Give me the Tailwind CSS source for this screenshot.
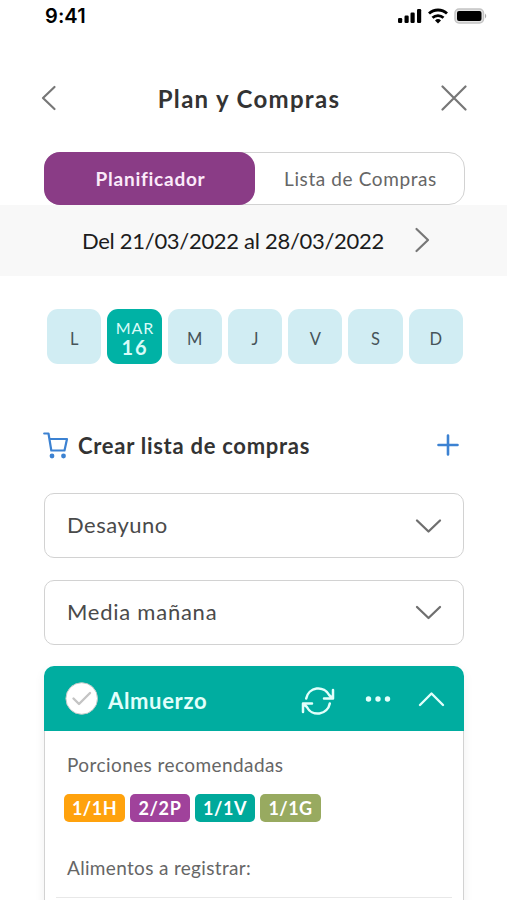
<!DOCTYPE html>
<html lang="es">
<head>
<meta charset="utf-8">
<title>Plan y Compras</title>
<script src="https://cdn.jsdelivr.net/npm/@tailwindcss/browser@4"></script>
</head>
<body class="h-[900px] w-[507px] overflow-hidden bg-white font-['Lato',sans-serif] text-[#333] whitespace-nowrap">
<div class="flex h-[900px] flex-col overflow-hidden">
  <!-- Status bar -->
  <div class="flex h-8 shrink-0 items-center justify-between pr-[19px] pl-[45px]">
    <span class="font-['Inter',sans-serif] text-[20px] leading-8 font-semibold tracking-[0.1px] text-black">9:41</span>
    <div class="flex items-center gap-[6px]">
      <svg class="h-4 w-6" viewBox="0 0 24 16" fill="#000"><rect x="0" y="10" width="4.200" height="5" rx="1.200"/><rect x="6.500" y="7.500" width="4.200" height="7.500" rx="1.200"/><rect x="12.500" y="4.500" width="4.200" height="10.500" rx="1.200"/><rect x="19" y="1" width="4.200" height="14" rx="1.200"/></svg>
      <svg class="h-4 w-5" viewBox="0 0 20 16" fill="none" stroke="#000" stroke-width="2.800"><path d="M1 5.600a13 13 0 0 1 18 0"/><path d="M4.500 9.800a8 8 0 0 1 11 0"/><path d="M10 15.500l-3-3a4.400 4.400 0 0 1 6 0z" fill="#000" stroke="none"/></svg>
      <svg class="h-4 w-[34px]" viewBox="0 0 34 16"><rect x="1" y="1" width="28.500" height="14" rx="4" fill="#e4e4e4" stroke="#c4c4c4" stroke-width="1.500"/><rect x="3" y="3" width="24.500" height="10" rx="2" fill="#000"/><path d="M31 5.500q2.500 2.500 0 5z" fill="#aaa"/></svg>
    </div>
  </div>

  <!-- Title -->
  <header class="flex h-[120px] shrink-0 items-center justify-between pt-[12px] pr-[40px] pl-[41px]">
    <svg class="h-[26px] w-[16px]" viewBox="0 0 16 26" fill="none" stroke="#777" stroke-width="2.200" stroke-linecap="round" stroke-linejoin="round"><path d="M13.500 2 2 13l11.500 11"/></svg>
    <h1 class="pt-[2px] text-[24px] leading-8 font-bold tracking-[1.3px]">Plan y Compras</h1>
    <svg class="h-[26px] w-[26px]" viewBox="0 0 26 26" fill="none" stroke="#777" stroke-width="2.200" stroke-linecap="round"><path d="M1.500 1.500 24.500 24.500M24.500 1.500 1.500 24.500"/></svg>
  </header>

  <!-- Tabs -->
  <div class="mr-[42px] ml-[44px] flex h-[53px] shrink-0 rounded-[16px] border-[1.5px] border-[#d2d2d2] bg-white">
    <div class="-m-px flex w-[211px] items-center justify-center rounded-[16px] bg-[#8a3c86] pb-px text-[19px] font-bold tracking-[0.75px] text-[#fbeafa]"><span class="pt-[3px] pl-[2px]">Planificador</span></div>
    <div class="flex flex-1 items-center justify-center text-[19px] tracking-[0.6px] text-[#666]"><span class="pt-[2px] pl-[3px]">Lista de Compras</span></div>
  </div>

  <!-- Week range -->
  <div class="flex h-[71px] shrink-0 items-center bg-[#f8f8f8] pl-[82px]">
    <span class="w-[332px] pb-px text-[22px] tracking-[-0.3px] text-[#1c1c1c]">Del 21/03/2022 al 28/03/2022</span>
    <svg class="mb-[2px] h-[26px] w-[16px]" viewBox="0 0 16 26" fill="none" stroke="#777" stroke-width="2.200" stroke-linecap="round" stroke-linejoin="round"><path d="M2.500 2 14 13 2.500 24"/></svg>
  </div>

  <!-- Days -->
  <div class="mx-[47px] mt-[33px] grid h-[55px] w-[416px] shrink-0 grid-cols-7 gap-[6px] text-[16.500px] text-[#465459] *:flex *:items-center *:justify-center *:rounded-[11px]">
    <div class="bg-[#d1edf3] pt-[5px]">L</div>
    <div class="flex-col bg-[#00b2a5] text-[#d9fbf8]"><span class="pl-px text-[16px] leading-[20px] tracking-[0.8px]">MAR</span><span class="pl-px text-[20px] leading-[18px] font-bold tracking-[1.8px]">16</span></div>
    <div class="bg-[#d1edf3] pt-[5px]">M</div>
    <div class="bg-[#d1edf3] pt-[5px]">J</div>
    <div class="bg-[#d1edf3] pt-[5px]">V</div>
    <div class="bg-[#d1edf3] pt-[5px]">S</div>
    <div class="bg-[#d1edf3] pt-[5px]">D</div>
  </div>

  <!-- Create list -->
  <div class="mt-[61px] flex h-[40px] shrink-0 items-center pr-[47px] pl-[43px]">
    <svg class="h-[27px] w-[26px]" viewBox="0 0 26 27" fill="none" stroke="#3c82d2" stroke-width="2.200" stroke-linecap="round" stroke-linejoin="round"><path d="M1.200 1.500h4.300l2.800 17H21.500L24 7H6.400"/><g fill="#3c82d2" stroke="none"><circle cx="9" cy="24" r="2.400"/><circle cx="20.500" cy="24" r="2.400"/></g></svg>
    <h2 class="ml-[9px] flex-1 pt-px text-[22px] leading-8 font-bold tracking-[0.72px]">Crear lista de compras</h2>
    <svg class="h-[24px] w-[24px]" viewBox="0 0 24 24" fill="none" stroke="#3c82d2" stroke-width="2.600" stroke-linecap="round"><path d="M12 2.500v19M2.500 12h19"/></svg>
  </div>

  <!-- Meals -->
  <div class="mx-[44px] mt-[28px] flex h-[65px] w-[420px] shrink-0 items-center justify-between rounded-[10px] border-[1.5px] border-[#d2d2d2] pr-[21px] pl-[22px]">
    <span class="pb-[2px] text-[22px] tracking-[0.5px] text-[#4a4a4a]">Desayuno</span>
    <svg class="h-[16px] w-[27px]" viewBox="0 0 27 16" fill="none" stroke="#6f6f6f" stroke-width="2.300" stroke-linecap="round" stroke-linejoin="round"><path d="M2 2.500 13.500 13.500 25 2.500"/></svg>
  </div>
  <div class="mx-[44px] mt-[22px] flex h-[65px] w-[420px] shrink-0 items-center justify-between rounded-[10px] border-[1.5px] border-[#d2d2d2] pr-[21px] pl-[22px]">
    <span class="pb-[2px] text-[22px] tracking-[0.75px] text-[#4a4a4a]">Media mañana</span>
    <svg class="h-[16px] w-[27px]" viewBox="0 0 27 16" fill="none" stroke="#6f6f6f" stroke-width="2.300" stroke-linecap="round" stroke-linejoin="round"><path d="M2 2 13.500 13 25 2"/></svg>
  </div>

  <!-- Expanded meal -->
  <section class="mx-[44px] mt-[21px] h-[260px] w-[420px] shrink-0 rounded-t-[10px] shadow-[0_4px_12px_rgba(0,0,0,0.06)]">
    <div class="flex h-[65px] items-center rounded-t-[10px] bg-[#00ada0] pr-[19px] pl-[21px] text-[#e2fffb]">
      <svg class="h-[34px] w-[34px]" viewBox="0 0 34 34" fill="none"><circle cx="16.700" cy="16.500" r="15.800" fill="#fff" stroke="#bfc9c7" stroke-width="1"/><path d="m8.500 16.500 5.500 5.500L25 11" stroke="#c4c4c4" stroke-width="2.400" stroke-linecap="round" stroke-linejoin="round"/></svg>
      <span class="ml-[9px] flex-1 pt-1 text-[22px] leading-8 font-bold tracking-[0.65px]">Almuerzo</span>
      <svg class="mt-[5px] mr-[30px] h-[30px] w-[34px]" viewBox="0 0 34 30" fill="none" stroke="currentColor" stroke-width="2.500" stroke-linecap="round" stroke-linejoin="round"><path d="M5.200 12.500A12.300 12.300 0 0 1 28.300 9.300L31.500 12M32 4v8.500h-9"/><path d="M28.800 17.500A12.300 12.300 0 0 1 5.700 20.700L2.500 18M2 26v-8.500h9"/></svg>
      <svg class="mr-[27px] h-[6px] w-[26px]" viewBox="0 0 26 6" fill="currentColor"><circle cx="3.500" cy="3" r="2.700"/><circle cx="13" cy="3" r="2.700"/><circle cx="22.500" cy="3" r="2.700"/></svg>
      <svg class="h-[16px] w-[27px]" viewBox="0 0 27 16" fill="none" stroke="currentColor" stroke-width="2.400" stroke-linecap="round" stroke-linejoin="round"><path d="M2 14 13.500 2.500 25 14"/></svg>
    </div>
    <div class="h-[195px] border-x-[1.5px] border-[#d2d2d2] bg-white pt-[21px] text-[19px] text-[#666]">
      <p class="pl-[22px] leading-[26px] tracking-[0.42px]">Porciones recomendadas</p>
      <div class="mt-[16px] flex h-[28px] gap-[5px] pl-[19px] text-[18px] font-bold text-white *:flex *:items-center *:justify-center *:rounded-[5px]">
        <span class="w-[61px] bg-[#ffa20d] tracking-[0.5px]">1/1H</span>
        <span class="w-[60px] bg-[#a0429b] tracking-[0.7px]">2/2P</span>
        <span class="w-[60px] bg-[#00a99b] tracking-[0.5px]">1/1V</span>
        <span class="w-[61px] bg-[#98aa60] tracking-[0.4px]">1/1G</span>
      </div>
      <p class="mt-[33px] pl-[22px] leading-[26px] tracking-[0.33px]">Alimentos a registrar:</p>
      <div class="mx-[11px] mt-[16px] h-px bg-[#e8e8e8]"></div>
    </div>
  </section>
</div>
</body>
</html>
